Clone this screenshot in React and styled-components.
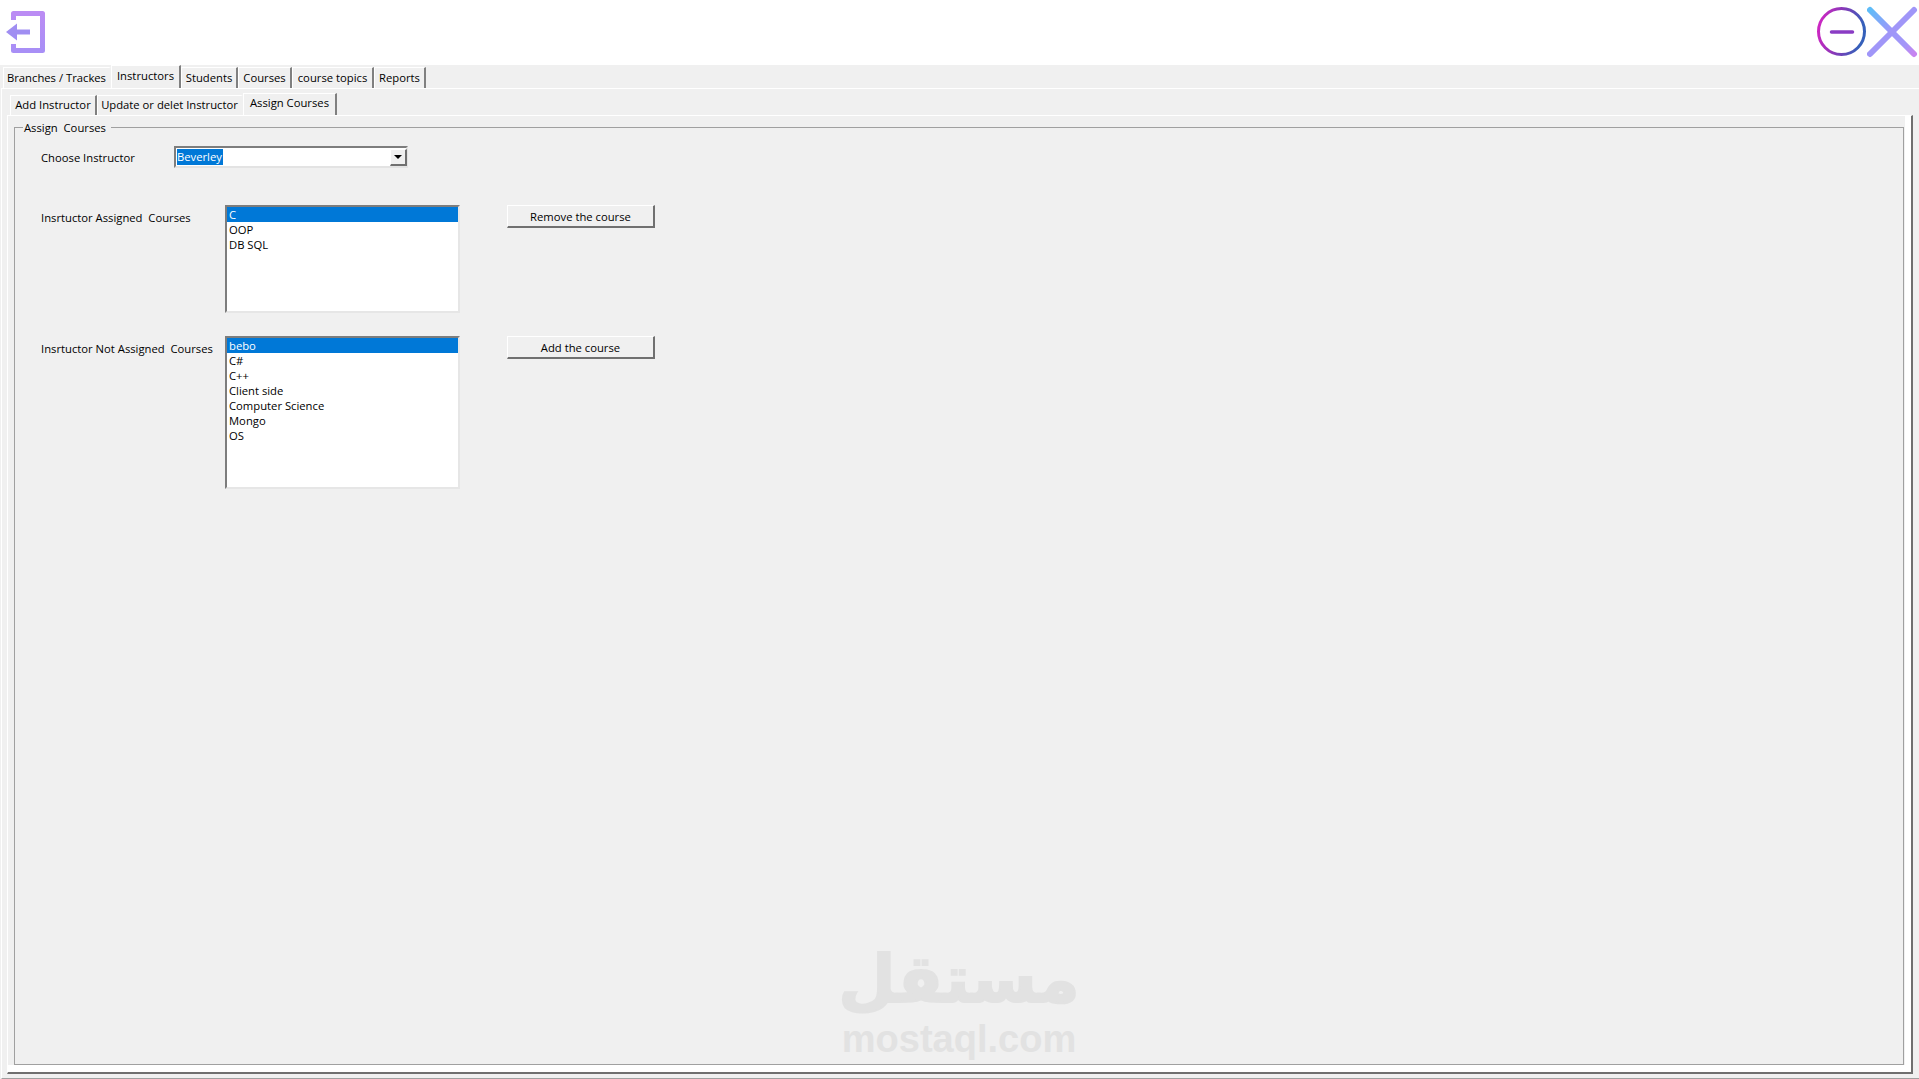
import React from 'react';
import styled, { createGlobalStyle } from 'styled-components';

const GlobalStyle = createGlobalStyle`
  html, body { margin: 0; padding: 0; height: 100%; }
  body { background: #f0f0f0; font-family: "Open Sans", "Noto Sans", "Liberation Sans", sans-serif; font-size: 11.25px; color: #000; overflow: hidden; }
  * { box-sizing: border-box; }
`;

const Page = styled.div`
  width: 1919px;
  height: 1079px;
  display: flex;
  flex-direction: column;
  position: relative;
  overflow: hidden;
  background: #f0f0f0;
`;

const Header = styled.header`
  height: 65px;
  flex: none;
  background: #fff;
  display: flex;
  align-items: flex-start;
  justify-content: space-between;
  padding-left: 5px;
`;

const WindowButtons = styled.div`
  display: flex;
`;

const TabBar = styled.div`
  display: flex;
  align-items: flex-end;
  flex: none;
  height: ${(p) => p.$height}px;
  padding-left: 3px;
`;

const Tab = styled.div`
  width: ${(p) => p.$w}px;
  height: ${(p) => (p.$active ? '100%' : 'calc(100% - 2px)')};
  display: flex;
  justify-content: center;
  align-items: center;
  white-space: pre;
  border-top: 1px solid #fff;
  border-left: 1px solid #fff;
  border-right: 2px solid;
  border-right-color: ${(p) => (p.$plain ? 'transparent' : '#808080')};
  padding-bottom: ${(p) => (p.$active ? '4px' : '2px')};
`;

const OuterPane = styled.main`
  flex: 1;
  margin-left: 1px;
  display: flex;
  flex-direction: column;
  border-top: 1px solid #fff;
  border-left: 1px solid #fff;
  border-bottom: 1px solid #a0a0a0;
  padding: 4px 6px 4px 5px;
  min-height: 0;
`;

const InnerPane = styled.section`
  flex: 1;
  display: flex;
  flex-direction: column;
  min-height: 0;
  border-top: 1px solid #fff;
  border-left: 1px solid #fff;
  border-right: 2px solid #6f6f6f;
  border-bottom: 2px solid #6f6f6f;
  padding: 3px 7px 7px 6px;
  box-shadow: inset -6px -7px 0 #fff;
`;

const Group = styled.fieldset`
  flex: 1;
  margin: 0;
  min-width: 0;
  border: 1px solid #a0a0a0;
  padding: 0;
`;

const GroupTitle = styled.legend`
  margin-left: 8px;
  padding: 1px 5px 0 1px;
  line-height: 15px;
  white-space: pre;
`;

const GroupBody = styled.div`
  padding-left: 26px;
`;

const ComboRow = styled.div`
  display: flex;
  align-items: center;
  padding-top: 11px;
`;

const Label = styled.label`
  width: ${(p) => p.$w}px;
  flex: none;
  white-space: pre;
`;

const Combo = styled.div`
  width: 234px;
  height: 22px;
  display: flex;
  align-items: center;
  justify-content: space-between;
  background: #fff;
  border-top: 2px solid #7d7d7d;
  border-left: 2px solid #7d7d7d;
  border-right: 2px solid #e3e3e3;
  border-bottom: 2px solid #e3e3e3;
  padding-left: 1px;
`;

const ComboValue = styled.span`
  background: #0078d7;
  color: #fff;
  height: 16px;
  line-height: 16px;
  padding-right: 1px;
`;

const ComboArrow = styled.span`
  width: 17px;
  height: 17px;
  margin-right: -1px;
  background: #f0f0f0;
  border-top: 1px solid #fff;
  border-left: 1px solid #fff;
  border-right: 2px solid #707070;
  border-bottom: 2px solid #707070;
  display: flex;
  align-items: center;
  justify-content: center;
  &::after {
    content: '';
    border-left: 4px solid transparent;
    border-right: 4px solid transparent;
    border-top: 4px solid #000;
  }
`;

const AssignRow = styled.div`
  display: flex;
  align-items: flex-start;
  margin-top: ${(p) => p.$top}px;
`;

const RowLabel = styled(Label)`
  margin-top: 5px;
`;

const ListBox = styled.ul`
  list-style: none;
  margin: 0;
  padding: 0;
  width: 235px;
  height: ${(p) => p.$h}px;
  flex: none;
  background: #fff;
  border-top: 2px solid #7d7d7d;
  border-left: 2px solid #7d7d7d;
  border-right: 2px solid #e6e6e6;
  border-bottom: 2px solid #e6e6e6;
`;

const ListItem = styled.li`
  height: 15px;
  line-height: 15px;
  padding-left: 2px;
  background: ${(p) => (p.$selected ? '#0078d7' : 'transparent')};
  color: ${(p) => (p.$selected ? '#fff' : '#000')};
`;

const ActionButton = styled.button`
  width: 148px;
  height: 23px;
  margin-left: 47px;
  padding: 0;
  font: inherit;
  color: #000;
  background: #f0f0f0;
  border-top: 1px solid #fff;
  border-left: 1px solid #fff;
  border-right: 2px solid #707070;
  border-bottom: 2px solid #707070;
`;

const Watermark = styled.div`
  position: absolute;
  left: 843px;
  top: 939px;
  width: 232px;
  display: flex;
  flex-direction: column;
  align-items: center;
  color: #e2e2e2;
  font-weight: 700;
  pointer-events: none;
`;

const WatermarkArabic = styled.span`
  font-family: "DejaVu Sans", sans-serif;
  font-size: 66px;
  line-height: 82px;
  -webkit-text-stroke: 2px #e2e2e2;
`;

const WatermarkLatin = styled.span`
  font-family: "Liberation Sans", sans-serif;
  font-size: 38px;
  line-height: 36px;
`;

const BackIcon = () => (
  <svg width="42" height="46" viewBox="0 0 42 46" fill="none" style={{ marginTop: 10 }}>
    <defs>
      <linearGradient id="back" x1="0" y1="0" x2="0" y2="1">
        <stop offset="0" stopColor="#bb8cf4" />
        <stop offset="1" stopColor="#a88ff6" />
      </linearGradient>
    </defs>
    <path d="M8.5 10V3.5H37.5V40.5H8.5V34" stroke="url(#back)" strokeWidth="5" strokeLinejoin="round" />
    <path d="M25 22H10" stroke="#a08ef2" strokeWidth="5" />
    <path d="M1 22L12 13.5V30.5Z" fill="#a08ef2" />
  </svg>
);

const MinimizeIcon = () => (
  <svg width="53" height="65" viewBox="0 0 53 65" fill="none">
    <defs>
      <linearGradient id="ring" x1="0" y1="0" x2="1" y2="0.2">
        <stop offset="0" stopColor="#d824c4" />
        <stop offset="0.5" stopColor="#8a38b8" />
        <stop offset="1" stopColor="#3560ba" />
      </linearGradient>
    </defs>
    <circle cx="27.5" cy="31.5" r="23" stroke="url(#ring)" strokeWidth="3" />
    <path d="M17.5 32H38.5" stroke="#8a3cc4" strokeWidth="3.5" strokeLinecap="round" />
  </svg>
);

const CloseIcon = () => (
  <svg width="52" height="65" viewBox="0 0 52 65" fill="none">
    <defs>
      <linearGradient id="cross" gradientUnits="userSpaceOnUse" x1="3" y1="10" x2="47" y2="54">
        <stop offset="0" stopColor="#5fbcf8" />
        <stop offset="0.45" stopColor="#9c98fa" />
        <stop offset="0.8" stopColor="#a496f8" />
        <stop offset="1" stopColor="#c884f0" />
      </linearGradient>
    </defs>
    <path d="M3 10L47 54" stroke="url(#cross)" strokeWidth="6" strokeLinecap="round" />
    <path d="M47 10L3 54" stroke="#a096f8" strokeWidth="6" strokeLinecap="round" />
  </svg>
);

const mainTabs = [
  { name: 'Branches / Trackes', w: 108, plain: true },
  { name: 'Instructors', w: 70, active: true },
  { name: 'Students', w: 57 },
  { name: 'Courses', w: 54 },
  { name: 'course topics', w: 82 },
  { name: 'Reports', w: 52 },
];

const subTabs = [
  { name: 'Add Instructor', w: 87 },
  { name: 'Update or delet Instructor', w: 146, plain: true },
  { name: 'Assign Courses', w: 94, active: true },
];

const assigned = ['C', 'OOP', 'DB SQL'];
const notAssigned = ['bebo', 'C#', 'C++', 'Client side', 'Computer Science', 'Mongo', 'OS'];

const Courses = ({ items, height }) => (
  <ListBox $h={height}>
    {items.map((item, i) => (
      <ListItem key={item} $selected={i === 0}>{item}</ListItem>
    ))}
  </ListBox>
);

const App = () => {
  return (
    <Page>
      <GlobalStyle />
      <Header>
        <BackIcon />
        <WindowButtons>
          <MinimizeIcon />
          <CloseIcon />
        </WindowButtons>
      </Header>

      <TabBar $height={23}>
        {mainTabs.map((t) => (
          <Tab key={t.name} $w={t.w} $active={t.active} $plain={t.plain}>{t.name}</Tab>
        ))}
      </TabBar>

      <OuterPane>
        <TabBar $height={22}>
          {subTabs.map((t) => (
            <Tab key={t.name} $w={t.w} $active={t.active} $plain={t.plain}>{t.name}</Tab>
          ))}
        </TabBar>

        <InnerPane>
          <Group>
            <GroupTitle>Assign  Courses</GroupTitle>
            <GroupBody>
              <ComboRow>
                <Label $w={133}>Choose Instructor</Label>
                <Combo>
                  <ComboValue>Beverley</ComboValue>
                  <ComboArrow />
                </Combo>
              </ComboRow>

              <AssignRow $top={37}>
                <RowLabel $w={184}>Insrtuctor Assigned  Courses</RowLabel>
                <Courses items={assigned} height={108} />
                <ActionButton>Remove the course</ActionButton>
              </AssignRow>

              <AssignRow $top={23}>
                <RowLabel $w={184}>Insrtuctor Not Assigned  Courses</RowLabel>
                <Courses items={notAssigned} height={153} />
                <ActionButton>Add the course</ActionButton>
              </AssignRow>
            </GroupBody>
          </Group>
        </InnerPane>
      </OuterPane>

      <Watermark>
        <WatermarkArabic>مستقل</WatermarkArabic>
        <WatermarkLatin>mostaql.com</WatermarkLatin>
      </Watermark>
    </Page>
  );
};

export default App;
